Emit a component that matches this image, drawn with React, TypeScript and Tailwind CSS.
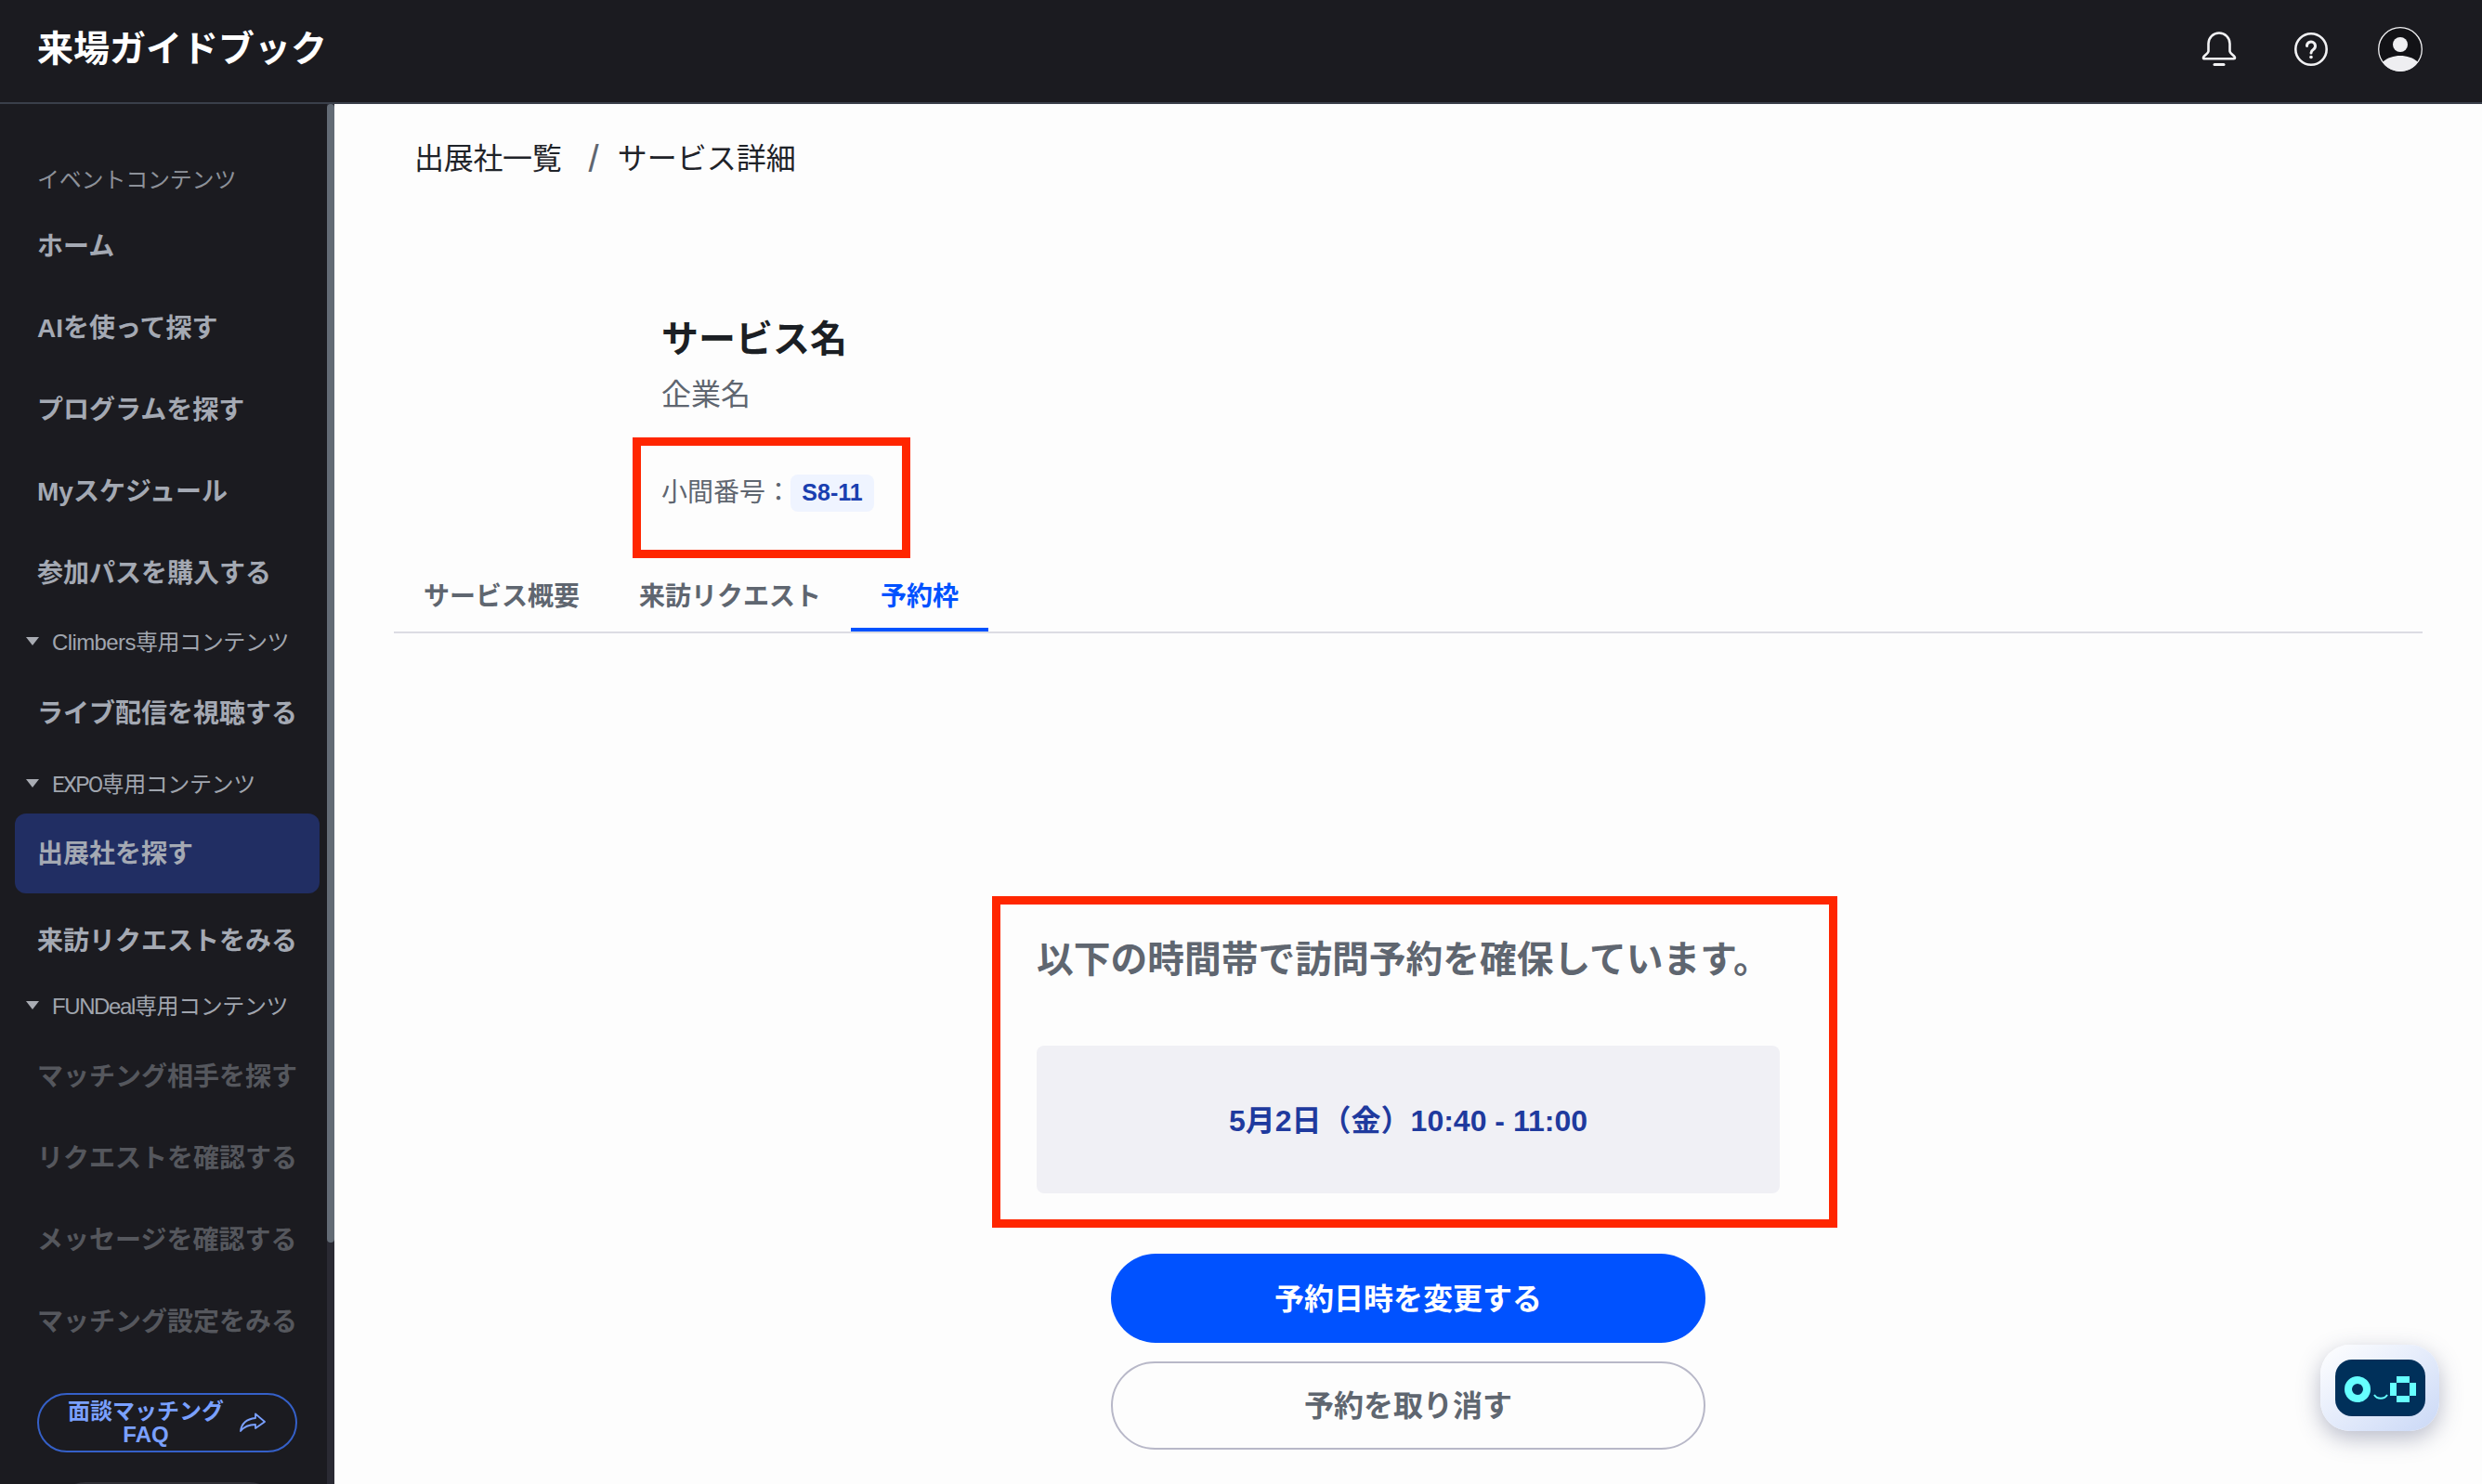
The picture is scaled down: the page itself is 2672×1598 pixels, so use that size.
import React from "react";

const font = { fontFamily: '"Liberation Sans", "Noto Sans CJK JP", sans-serif' };

function Section({ latin, latinClass, className }: { latin: string; latinClass: string; className: string }) {
  return (
    <div className={`flex items-center pl-[28px] gap-[4px] text-[24px] text-[#a0a5ae] ${className}`}>
      <svg width="24" height="14" viewBox="0 0 24 14" className="shrink-0">
        <path d="M0 1H14L7 10Z" fill="#a9acb3" />
      </svg>
      <span className="tracking-[-0.4px]">
        <span className={latinClass}>{latin}</span>専用コンテンツ
      </span>
    </div>
  );
}

function Item({ children, tone = "text-[#a4a9b3]", className = "" }: { children: React.ReactNode; tone?: string; className?: string }) {
  return <div className={`flex h-[88px] items-center pl-[40px] text-[28px] font-bold whitespace-nowrap ${tone} ${className}`}>{children}</div>;
}

export default function App() {
  return (
    <div className="flex h-[1598px] w-[2672px] flex-col overflow-hidden bg-[#fdfdfd]" style={font}>
      <header className="flex h-[112px] shrink-0 items-center justify-between border-b-2 border-[#3a3f4a] bg-[#1b1b20] pb-[4px] pl-[40px] pr-[64px]">
        <div className="text-[39px] font-bold text-white">来場ガイドブック</div>
        <div className="flex items-center">
          <svg width="38" height="38" viewBox="0 0 38 38" fill="none" stroke="#f1f1f3" strokeWidth="2.600" strokeLinecap="round" strokeLinejoin="round">
            <path d="M7.500 13a11.500 11.500 0 0 1 23 0V21c0 3 6 5 5.500 7.500c0 .5-.5.8-1.200.8H3.200c-.7 0-1.200-.3-1.200-.8C1.500 26 7.500 24 7.500 21Z" />
            <path d="M14 35.500h10" strokeWidth="3" />
          </svg>
          <svg className="ml-[62px]" width="36" height="36" viewBox="0 0 36 36" fill="none" stroke="#f1f1f3">
            <circle cx="18" cy="18" r="16.700" strokeWidth="2.600" />
            <path d="M13.500 14.500a4.500 4.500 0 1 1 7 3.700c-1.700 1.100-2.500 2-2.500 3.800" strokeWidth="3" strokeLinecap="round" />
            <circle cx="18" cy="26.500" r="1.800" fill="#f1f1f3" stroke="none" />
          </svg>
          <svg className="ml-[54px]" width="48" height="48" viewBox="0 0 48 48">
            <circle cx="24" cy="24" r="23.300" fill="#121216" stroke="#f1f1f3" strokeWidth="1.300" />
            <circle cx="24" cy="19" r="8" fill="#eeeef1" />
            <path d="M5 38C10 33 17 31 24 31S38 33 43 38A23 23 0 0 1 5 38Z" fill="#eeeef1" />
          </svg>
        </div>
      </header>

      <div className="flex min-h-0 flex-1">
        <aside className="flex w-[360px] shrink-0 bg-[#1b1b20]">
          <nav className="w-[352px] overflow-hidden pt-[64px]">
            <div className="flex h-[36px] items-center pl-[40px] text-[24px] tracking-[-0.2px] text-[#8d9199]">イベントコンテンツ</div>
            <div className="h-[10px]" />
            <Item>ホーム</Item>
            <Item>AIを使って探す</Item>
            <Item>プログラムを探す</Item>
            <Item>Myスケジュール</Item>
            <Item>参加パスを購入する</Item>
            <Section className="mb-[3px] h-[60px]" latin="Climbers" latinClass="tracking-[-0.6px]" />
            <Item>ライブ配信を視聴する</Item>
            <Section className="h-[63px]" latin="EXPO" latinClass="font-['Roboto'] tracking-[-1.7px]" />
            <div className="mx-[16px] flex h-[86px] w-[328px] items-center rounded-[12px] bg-[#212e63] pl-[24px] pt-[2px] text-[28px] font-bold text-[#a4a9b3]">出展社を探す</div>
            <Item className="mt-[8px]">来訪リクエストをみる</Item>
            <Section className="mb-[6px] h-[52px]" latin="FUNDeal" latinClass="tracking-[-1.4px]" />
            <Item tone="text-[#55575d]">マッチング相手を探す</Item>
            <Item tone="text-[#55575d]">リクエストを確認する</Item>
            <Item tone="text-[#55575d]">メッセージを確認する</Item>
            <Item tone="text-[#55575d]">マッチング設定をみる</Item>
            <div className="ml-[40px] mt-[32px] flex h-[64px] w-[280px] items-center rounded-full border-2 border-[#3560c8] pl-[30px]">
              <div className="w-[170px] text-center text-[24px] font-bold leading-[25px] text-[#7aa0ff]">面談マッチング<br />FAQ</div>
              <svg className="ml-[16px]" width="28" height="22" viewBox="0 0 28 22" fill="none" stroke="#7aa0ff" strokeWidth="1.800" strokeLinejoin="round">
                <path d="M17 1.500L27 10L17 17V13C10 13 5 15 1 20C2 12 8 7 17 6Z" />
              </svg>
            </div>
            <div className="ml-[60px] mt-[32px] h-[64px] w-[240px] rounded-[32px] border-2 border-[#2f2f36]" />
          </nav>
          <div className="w-[8px] bg-[#2a2a33]">
            <div className="h-[1226px] rounded-full bg-[#636b75]" />
          </div>
        </aside>

        <main className="relative min-w-0 flex-1 pl-[64px] pr-[64px] pt-[35px]">
          <div className="flex h-[48px] items-center pl-[22px] text-[32px] text-[#1f2329]">
            <span className="tracking-[-0.3px]">出展社一覧</span>
            <span className="ml-[29px] mr-[20px] text-[40px] leading-[48px] text-[#5f6670]">/</span>
            <span>サービス詳細</span>
          </div>

          <div className="ml-[288px] mt-[142px] text-[40px] font-bold leading-[56px] text-[#1b1f24]">サービス名</div>
          <div className="ml-[288px] mt-[8px] text-[32px] leading-[48px] text-[#5f6670]">企業名</div>
          <div className="ml-[257px] mt-[22px] flex h-[130px] w-[299px] items-center border-[9px] border-[#ff2600] pb-[10px] pl-[22px]">
            <span className="text-[28px] text-[#5f6670]">小間番号：</span>
            <span className="-ml-[1px] flex h-[40px] w-[90px] items-center justify-center rounded-[8px] bg-[#eff4ff] text-[25px] font-bold text-[#1a3fb0]">S8-11</span>
          </div>

          <div className="flex h-[81px] border-b-2 border-[#dcdce3] text-[28px] font-bold text-[#5f6670]">
            <div className="flex items-center px-[32px] pb-[4px] pt-[8px]">サービス概要</div>
            <div className="flex items-center px-[32px] pb-[4px] pt-[8px]">来訪リクエスト</div>
            <div className="flex items-center border-b-4 border-[#0052ff] px-[32px] pt-[8px] text-[#0052ff]">予約枠</div>
          </div>

          <div className="flex flex-col items-center pt-[283px]">
            <div className="ml-[14px] h-[357px] w-[910px] border-[9px] border-[#ff2600] pl-[39px] pt-[29px]">
              <div className="text-[39.750px] font-bold leading-[60px] text-[#5f6670]">以下の時間帯で訪問予約を確保しています。</div>
              <div className="mt-[63px] flex h-[159px] w-[800px] items-center justify-center rounded-[8px] bg-[#f0f0f5] pt-[2px] text-[32px] font-bold text-[#1f3a9e]">5月2日（金）10:40 - 11:00</div>
            </div>
            <div className="mt-[28px] flex h-[96px] w-[640px] items-center justify-center rounded-full bg-[#0052ff] pt-[1px] text-[32px] font-bold text-white">予約日時を変更する</div>
            <div className="mt-[20px] flex h-[95px] w-[640px] items-center justify-center rounded-full border-2 border-[#b8b8c8] pt-[1px] text-[32px] font-bold text-[#5f6670]">予約を取り消す</div>
          </div>

          <div className="absolute bottom-[57px] right-[46px] flex h-[93px] w-[128px] items-center justify-center rounded-[32px] bg-gradient-to-br from-white to-[#cad8f6] shadow-[0_8px_24px_rgba(60,70,110,0.35)]">
            <div className="h-[61px] w-[97px] rounded-[18px] bg-[#00305a]">
              <svg width="97" height="61" viewBox="0 0 97 61">
                <circle cx="24" cy="32" r="10" fill="none" stroke="#66ffff" strokeWidth="8" />
                <path d="M42 38c3 5 11 5 14 0" fill="none" stroke="#66ffff" strokeWidth="2" />
                <path fill="#66ffff" fillRule="evenodd" d="M66 18h14v7h7v14h-7v7H66v-7h-7V25h7Z M66 25v14h14V25Z" />
              </svg>
            </div>
          </div>
        </main>
      </div>
    </div>
  );
}
